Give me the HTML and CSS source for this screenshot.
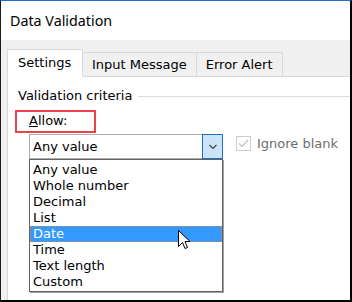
FILE: index.html
```html
<!DOCTYPE html>
<html lang="en">
  <head>
    <meta charset="UTF-8" />
    <title>Data Validation</title>
    <link rel="stylesheet" href="styles.css">
  </head>
  <body>
    <div class="window">
      <div class="titlebar">Data Validation</div>
      <div class="client">
        <div class="tabs">
          <div class="tab active">Settings</div>
          <div class="tab">Input Message</div>
          <div class="tab">Error Alert</div>
        </div>
        <div class="panel">
          <div class="group-title"><span>Validation criteria</span></div>
          <div class="allow"><u>A</u>llow:</div>
          <div class="row">
            <div class="combo-col">
              <div class="combo">
                <div class="combo-text">Any value</div>
                <div class="combo-btn">
                  <svg width="10" height="6" viewBox="0 0 10 6">
                    <path d="M1.5 1 L5 4.5 L8.5 1" fill="none" stroke="#404040" stroke-width="1.1" />
                  </svg>
                </div>
              </div>
              <ul class="list">
                <li>Any value</li>
                <li>Whole number</li>
                <li>Decimal</li>
                <li>List</li>
                <li class="selected">Date</li>
                <li>Time</li>
                <li>Text length</li>
                <li>Custom</li>
              </ul>
            </div>
            <label class="check">
              <span class="box">
                <svg width="13" height="13" viewBox="0 0 13 13">
                  <path d="M2 6.5 L5 9.5 L11 3" fill="none" stroke="#c4c4c4" stroke-width="1.3" />
                </svg>
              </span>
              Ignore blank
            </label>
          </div>
        </div>
      </div>
      <svg class="cursor" width="13" height="21" viewBox="0 0 13 21">
        <path d="M0.5 0.5 L0.5 16.5 L4.5 12.5 L7 18.5 L9.5 17.5 L7 11.5 L12 11.5 Z" fill="#fff" stroke="#000" stroke-width="1" stroke-linejoin="miter" />
      </svg>
    </div>
  </body>
</html>
```

FILE: styles.css
```css
body {
  margin: 0;
  font-family: "DejaVu Sans", sans-serif;
  font-size: 13px;
  color: #000000;
}

.window {
  position: relative;
  width: 352px;
  height: 302px;
  box-sizing: border-box;
  border-top: 1px solid #1f6fc4;
  border-left: 1px solid #1a1a1a;
  border-right: 2px solid #000000;
  border-bottom: 2px solid #000000;
  display: flex;
  flex-direction: column;
  background: #ffffff;
}

.titlebar {
  height: 39px;
  line-height: 40px;
  padding-left: 9px;
  font-family: "Noto Sans", sans-serif;
  font-size: 14.3px;
}

.client {
  flex: 1;
  display: flex;
  flex-direction: column;
  background: #f0f0f0;
  padding: 9px 0 0 6px;
}

.tabs {
  display: flex;
  align-items: flex-end;
  height: 28px;
  margin-bottom: -1px;
  position: relative;
  z-index: 1;
}

.tab {
  box-sizing: border-box;
  height: 25px;
  line-height: 23px;
  border: 1px solid #d9d9d9;
  border-left: none;
  background: #f0f0f0;
  padding: 0 9px;
}

.tab.active {
  height: 28px;
  line-height: 26px;
  background: #ffffff;
  border-left: 1px solid #d9d9d9;
  border-bottom-color: #ffffff;
  width: 76px;
  padding: 0 0 0 10px;
}

.panel {
  flex: 1;
  background: #ffffff;
  border-top: 1px solid #d9d9d9;
  border-left: 1px solid #d9d9d9;
}

.group-title {
  display: flex;
  align-items: center;
  margin-top: 11px;
  padding-left: 10px;
  line-height: 16px;
}

.group-title::after {
  content: "";
  flex: 1;
  height: 1px;
  background: #dcdcdc;
  margin-left: 6px;
}

.allow {
  box-sizing: border-box;
  width: 81px;
  height: 23px;
  margin: 6px 0 0 7px;
  border: 2px solid #e8424a;
  padding-left: 12px;
  line-height: 18px;
}

.row {
  display: flex;
  align-items: flex-start;
  margin-top: 1px;
  padding-left: 21px;
}

.combo-col {
  width: 194px;
}

.combo {
  box-sizing: border-box;
  display: flex;
  height: 25px;
  border: 1px solid #adadad;
  border-right: none;
}

.combo-text {
  flex: 1;
  line-height: 24px;
  padding-left: 3px;
}

.combo-btn {
  box-sizing: border-box;
  width: 21px;
  height: 25px;
  margin-top: -1px;
  background: #cce4f7;
  border: 1px solid #1f6fc4;
  display: flex;
  align-items: center;
  justify-content: center;
}

.list {
  list-style: none;
  margin: 0;
  padding: 2px 0 1px;
  border: 1px solid #646464;
  box-shadow: 1px 1px 0 #a0a0a0;
}

.list li {
  box-sizing: border-box;
  height: 16px;
  line-height: 16px;
  padding-left: 3px;
}

.list li.selected {
  background: #3399ff;
  color: #ffffff;
  border: 1px dotted #c88a4a;
  line-height: 14px;
  padding-left: 2px;
}

.check {
  display: flex;
  align-items: center;
  margin: 2px 0 0 13px;
  color: #6d6d6d;
  line-height: 15px;
}

.box {
  box-sizing: border-box;
  width: 15px;
  height: 15px;
  border: 1px solid #cccccc;
  margin-right: 6px;
  display: flex;
  align-items: center;
  justify-content: center;
}

.cursor {
  position: absolute;
  left: 177px;
  top: 229px;
}
```
